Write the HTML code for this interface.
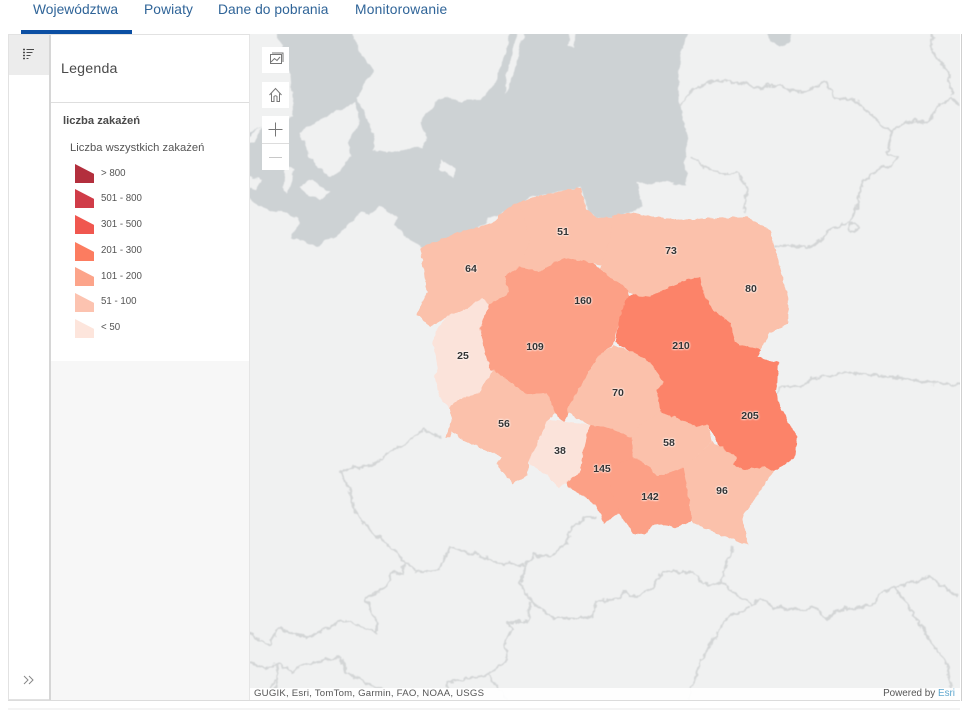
<!DOCTYPE html>
<html lang="pl"><head><meta charset="utf-8"><title>Legenda</title>
<style>
html,body{margin:0;padding:0;background:#fff;width:962px;height:710px;overflow:hidden;font-family:"Liberation Sans",sans-serif}
.a{position:absolute}
#tabs span{position:absolute;top:1px;font-size:13.8px;line-height:17px;color:#2f6498;white-space:nowrap;filter:blur(.25px)}
.lg{position:absolute;left:101px;font-size:9.7px;line-height:12px;color:#555;white-space:nowrap;filter:blur(.25px)}
.sw{position:absolute;left:75px;width:19px;height:19px;clip-path:polygon(0 0,100% 52%,100% 100%,0 100%)}
.n{position:absolute;width:40px;margin-left:-20px;text-align:center;font-size:10.5px;line-height:12px;font-weight:700;color:#333;text-shadow:0 0 2px #fff,0 0 2px #fff}
.btn{position:absolute;left:262px;width:27px;background:#fff}
</style></head><body>
<div id="tabs">
<span style="left:33px;letter-spacing:.02px">Województwa</span><span style="left:144px;letter-spacing:.1px">Powiaty</span><span style="left:218px;letter-spacing:.05px">Dane do pobrania</span><span style="left:355px;letter-spacing:.2px">Monitorowanie</span>
</div>
<div class="a" style="left:21px;top:30px;width:111px;height:4px;background:#0b4fa3"></div>

<svg class="a" style="left:250px;top:34px" width="710" height="666" viewBox="250 34 710 666">
<defs>
<filter id="j" x="-5%" y="-5%" width="110%" height="110%"><feTurbulence type="fractalNoise" baseFrequency="0.16" numOctaves="2" seed="4"/><feDisplacementMap in="SourceGraphic" scale="4" xChannelSelector="R" yChannelSelector="G"/><feGaussianBlur stdDeviation="0.35"/></filter>
<filter id="c" x="0" y="0" width="100%" height="100%"><feTurbulence type="fractalNoise" baseFrequency="0.09" numOctaves="3" seed="9"/><feDisplacementMap in="SourceGraphic" scale="7" xChannelSelector="R" yChannelSelector="G"/><feGaussianBlur stdDeviation="0.45"/></filter>
<filter id="b" x="0" y="0" width="100%" height="100%"><feTurbulence type="fractalNoise" baseFrequency="0.14" numOctaves="3" seed="2"/><feDisplacementMap in="SourceGraphic" scale="7" xChannelSelector="R" yChannelSelector="G"/><feGaussianBlur stdDeviation="0.4"/></filter>
</defs>
<rect x="250" y="34" width="710" height="666" fill="#f0f1f1"/>
<g filter="url(#c)">
<polygon fill="#cdd2d4" points="273,20 347,20 360,52 373,70 357,97 368,120 375,137 373,150 387,153 407,148 423,147 425,137 420,123 432,108 438,98 460,100 482,100 492,87 503,63 513,20 523,20 506,75 505,95 517,63 525,20 693,20 680,57 678,97 687,133 685,163 687,185 638,182 638,197 642,207 630,213 613,218 597,218 587,210 580,188 533,197 507,210 460,237 423,248 410,240 397,227 383,217 360,213 347,227 317,247 292,238 300,220 283,213 263,207 240,196 240,135 262,126 293,118 290,75"/>
<g fill="#f0f1f1">
<polygon points="240,20 273,20 285,70 262,60 240,68"/>
<polygon points="322,117 357,103 358,123 347,143 352,157 340,170 330,177 310,157 300,133"/>
<polygon points="300,187 312,180 330,193 320,200 305,193"/>
<polygon points="360,220 380,207 397,217 393,227 380,217"/>
<polygon points="440,160 455,168 453,177 440,170"/>
<polygon points="240,173 262,180 256,190 240,187"/>
<polygon points="285,165 295,170 287,195 283,190"/>
<polygon points="255,130 262,126 255,142 240,142"/>
<polygon points="570,20 578,20 573,48 568,46"/>
<polygon points="675,182 655,182 640,186 640,200 650,205 665,195"/>
</g>
<polygon fill="#cdd2d4" points="763,20 797,20 790,42 780,47 770,42"/>
</g>
<g filter="url(#b)" fill="none" stroke="#d3d5d6" stroke-width="2" stroke-linejoin="round">
<polyline points="680,105 693,90 705,84 718,80 735,83 750,85 758,88 770,85 780,85 790,90 797,92 812,90 825,80 830,90 835,98 855,100 865,110 873,117 885,128 892,132 902,123 915,120 928,123 937,108 952,97 958,105"/>
<polyline points="952,94 947,70 932,52 933,20"/>
<polyline points="892,132 887,153 898,157 893,165 877,170 862,182 857,207 850,222 840,225 827,232 820,242 807,248 793,245 775,247"/>
<circle cx="853" cy="228" r="5"/>
<polyline points="690,157 705,167 720,173 738,173 748,187 743,213"/>
<polyline points="777,393 782,387 800,387 815,378 830,375 850,373 870,375 900,378 930,383 970,385"/>
<polyline points="443,438 423,430 405,445 387,453 373,465 350,468 340,472 350,490 353,507 365,525 390,547 407,563 417,572 438,570 450,547 477,555 497,563 525,565 533,555 550,557 567,543 572,527 587,517 597,517"/>
<polyline points="525,565 520,583 532,603 553,618 583,618 593,615 595,602 620,598 623,592 637,597 653,587 662,572 680,572 693,572 705,585 722,582 723,572 735,545"/>
<polyline points="722,582 737,595 752,605 760,598 773,607 800,610 813,607 827,620 838,610 873,605 880,593 895,587 930,577 947,590 958,595"/>
<polyline points="895,587 913,613 933,645 947,663 953,700"/>
<polyline points="750,607 727,618 717,633 700,663 688,700"/>
<polyline points="530,603 528,622 507,622 513,630 505,640 507,660 488,675 508,700"/>
<polyline points="447,700 447,682 488,675"/>
<polyline points="340,657 347,673 400,700"/>
<polyline points="340,657 303,665 293,673 278,663 265,670 240,657"/>
<polyline points="405,563 403,573 392,572 387,587 365,598 377,623 377,633 345,620 307,638 278,628 270,645 240,628"/>
<polyline points="278,663 275,700"/>
<polyline points="265,700 275,680"/>
</g>
<g filter="url(#j)" stroke-width=".6" stroke-linejoin="round">
<polygon fill="#fbc1ab" stroke="#fbc1ab" points="420,248 457,233 493,223 507,208 520,203 530,240 520,267 505,277 510,293 488,305 483,298 470,307 447,317 430,327 417,313 427,293 423,263"/>
<polygon fill="#fbc1ab" stroke="#fbc1ab" points="520,203 533,197 580,188 587,210 597,218 613,218 625,250 610,268 592,263 567,258 553,263 540,272 520,267 530,240"/>
<polygon fill="#fbc1ab" stroke="#fbc1ab" points="613,215 630,213 677,220 747,217 770,230 773,243 788,297 788,323 770,333 760,350 740,345 735,342 730,323 713,310 703,293 700,277 688,280 667,288 650,297 633,295 628,290 610,277 600,268 610,240"/>
<polygon fill="#fca086" stroke="#fca086" points="505,277 520,267 540,272 553,263 567,258 592,263 610,277 628,290 628,303 620,317 613,343 600,355 590,370 583,383 568,408 568,413 563,422 555,413 547,393 527,395 493,370 490,370 483,347 480,327 488,305 510,293"/>
<polygon fill="#fc8369" stroke="#fc8369" points="628,297 633,295 650,297 667,288 688,280 700,277 703,293 713,310 730,323 735,342 740,345 760,350 757,357 778,363 777,383 775,390 780,407 797,437 795,457 773,472 765,467 743,470 733,465 737,458 720,447 708,425 697,427 682,420 660,412 657,390 663,382 650,363 633,352 615,342 620,317"/>
<polygon fill="#fbe3da" stroke="#fbe3da" points="435,333 447,317 470,307 483,298 488,305 480,327 483,347 490,370 502,380 485,383 480,393 463,398 450,407 440,397 435,377 438,367 433,343"/>
<polygon fill="#fbc1ab" stroke="#fbc1ab" points="600,355 613,345 633,352 650,363 663,382 657,390 660,412 637,427 632,438 612,430 590,425 568,413 568,408 583,383 590,370"/>
<polygon fill="#fbc1ab" stroke="#fbc1ab" points="450,407 463,398 480,393 485,383 493,370 527,395 547,393 555,413 548,420 537,445 528,462 527,475 513,483 497,465 502,457 490,452 463,440 452,430 450,437 445,437 452,420"/>
<polygon fill="#fbe3da" stroke="#fbe3da" points="548,420 563,422 590,425 587,437 583,457 580,473 567,482 558,487 550,477 528,462 537,445"/>
<polygon fill="#fca086" stroke="#fca086" points="590,425 612,430 632,438 633,458 613,467 610,490 620,513 617,513 605,523 597,507 587,498 568,487 567,482 580,473 583,457 587,437"/>
<polygon fill="#fbc1ab" stroke="#fbc1ab" points="660,412 682,420 697,427 708,425 712,442 683,468 657,477 650,467 633,458 632,438 637,427"/>
<polygon fill="#fbc1ab" stroke="#fbc1ab" points="713,442 720,447 737,458 733,465 743,470 765,467 773,472 742,517 748,545 717,533 693,522 683,468"/>
<polygon fill="#fca086" stroke="#fca086" points="683,468 692,520 675,528 657,523 643,535 633,533 620,513 610,490 613,467 633,458 650,467 657,477"/>
</g>
</svg>

<div class="a" style="left:250px;top:688px;width:710px;height:12px;background:rgba(255,255,255,.93)"></div>
<div class="a" style="left:254px;top:688px;font-size:9.6px;line-height:12px;color:#555;letter-spacing:.22px;white-space:nowrap;filter:blur(.25px)">GUGIK, Esri, TomTom, Garmin, FAO, NOAA, USGS</div>
<div class="a" style="right:7px;top:688px;font-size:9.9px;line-height:12px;color:#555;white-space:nowrap;filter:blur(.25px)">Powered by <span style="color:#5fa8cf">Esri</span></div>

<div class="n" style="left:471px;top:263px">64</div>
<div class="n" style="left:563px;top:226px">51</div>
<div class="n" style="left:671px;top:245px">73</div>
<div class="n" style="left:751px;top:283px">80</div>
<div class="n" style="left:583px;top:295px">160</div>
<div class="n" style="left:681px;top:340px">210</div>
<div class="n" style="left:535px;top:341px">109</div>
<div class="n" style="left:463px;top:350px">25</div>
<div class="n" style="left:618px;top:387px">70</div>
<div class="n" style="left:750px;top:410px">205</div>
<div class="n" style="left:504px;top:418px">56</div>
<div class="n" style="left:560px;top:445px">38</div>
<div class="n" style="left:669px;top:437px">58</div>
<div class="n" style="left:602px;top:463px">145</div>
<div class="n" style="left:650px;top:491px">142</div>
<div class="n" style="left:722px;top:485px">96</div>

<div class="btn" style="top:47px;height:26px"><svg width="27" height="26" fill="none" stroke="#777" stroke-width="1"><rect x="8.500" y="7.500" width="11" height="9"/><path d="M10 6h11v9M9 15l3.500-3.500 2.500 2 3-3.500"/></svg></div>
<div class="btn" style="top:82px;height:26px"><svg width="27" height="26" fill="none" stroke="#777" stroke-width="1"><path d="M7.500 13L13.500 6.500 19.500 13M9.500 11.500V19.500H12V14.500Q13.500 13 15 14.500V19.500H17.500V11.500"/></svg></div>
<div class="btn" style="top:116px;height:27px"><svg width="27" height="27" stroke="#777" stroke-width="1"><path d="M6.500 13.500h14M13.500 6.500v14"/></svg></div>
<div class="btn" style="top:144px;height:26px;border-top:1px solid #ddd;margin-top:-1px"><svg width="27" height="26" stroke="#c8c8c8" stroke-width="1"><path d="M7 13.500h13"/></svg></div>

<div class="a" style="left:8px;top:34px;width:242px;height:666px;background:#fff;border:1px solid #e2e2e2;border-right:0;box-sizing:border-box"></div>
<div class="a" style="left:9px;top:35px;width:40px;height:40px;background:#ececec"></div>
<svg class="a" style="left:22px;top:48px" width="14" height="14" fill="none" stroke="#4a4a4a"><path d="M1 1.500h2M1 4.500h2M1 7.500h2M1 10.500h2" stroke-width="1.600"/><path d="M4.500 1.500h7.500M4.500 4.500h6M4.500 7.500h4M4.500 10.500h2" stroke-width="1"/></svg>
<div class="a" style="left:49px;top:35px;width:2px;height:665px;background:#d6d6d6"></div>
<div class="a" style="left:51px;top:35px;width:198px;height:326px;background:#fff"></div>
<div class="a" style="left:51px;top:361px;width:198px;height:339px;background:#f7f7f7"></div>
<div class="a" style="left:51px;top:102px;width:198px;height:1px;background:#dedede"></div>
<div class="a" style="left:249px;top:35px;width:1px;height:665px;background:#e5e5e5"></div>
<div class="a" style="left:61px;top:61px;font-size:14.2px;line-height:17px;color:#4a4a4a;letter-spacing:.2px;filter:blur(.25px)">Legenda</div>
<div class="a" style="left:63px;top:114px;font-size:11.2px;line-height:14px;font-weight:700;color:#4a4a4a;white-space:nowrap;filter:blur(.25px)">liczba zakażeń</div>
<div class="a" style="left:70px;top:141px;font-size:11.2px;line-height:14px;color:#555;letter-spacing:.03px;white-space:nowrap;filter:blur(.25px)">Liczba wszystkich zakażeń</div>
<div class="sw" style="top:164px;background:#b32f3d"></div><div class="lg" style="top:168px">&gt; 800</div>
<div class="sw" style="top:189px;background:#d03c48"></div><div class="lg" style="top:193px">501 - 800</div>
<div class="sw" style="top:215px;background:#f0574f"></div><div class="lg" style="top:219px">301 - 500</div>
<div class="sw" style="top:242px;background:#fc7c60"></div><div class="lg" style="top:245px">201 - 300</div>
<div class="sw" style="top:267px;background:#fca48a"></div><div class="lg" style="top:271px">101 - 200</div>
<div class="sw" style="top:293px;background:#fcc3b0"></div><div class="lg" style="top:296px">51 - 100</div>
<div class="sw" style="top:319px;background:#fde5dc"></div><div class="lg" style="top:322px">&lt; 50</div>
<svg class="a" style="left:23px;top:675px" width="12" height="10" fill="none" stroke="#888" stroke-width="1"><path d="M1 1l4 4-4 4M6 1l4 4-4 4"/></svg>
<div class="a" style="left:8px;top:700px;width:952px;height:1px;background:#dcdcdc"></div>
<div class="a" style="left:8px;top:708px;width:952px;height:2px;background:#f4f4f4"></div>
<div class="a" style="left:961px;top:34px;width:1px;height:667px;background:#cfcfcf"></div>
</body></html>
